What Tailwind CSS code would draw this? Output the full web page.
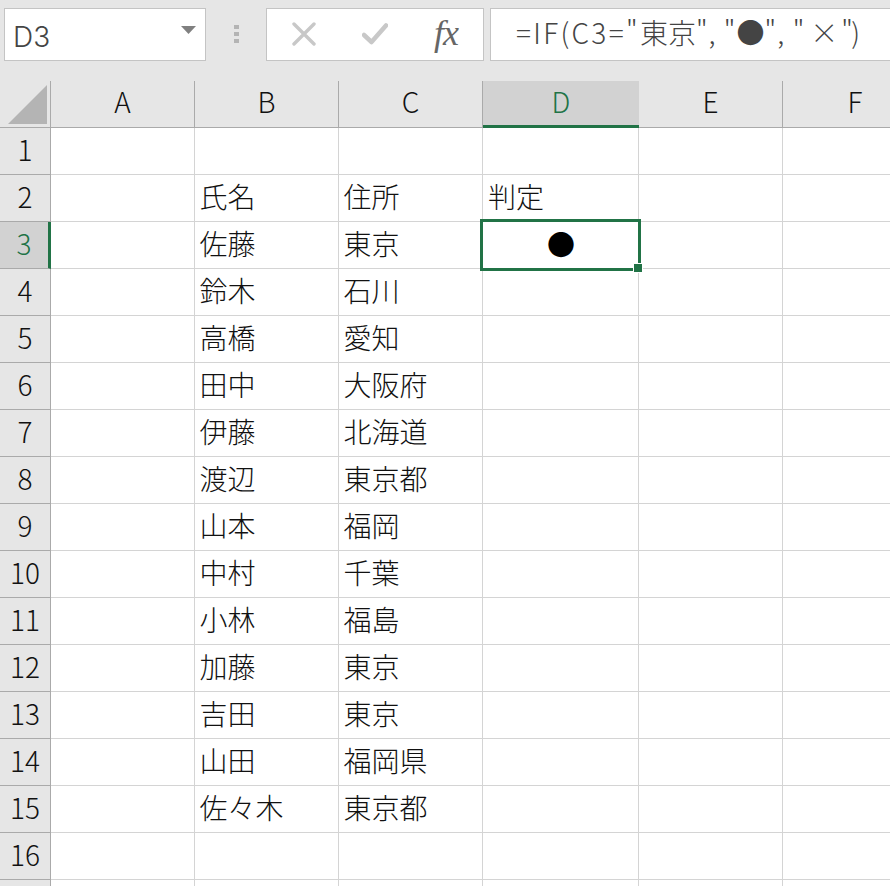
<!doctype html>
<html lang="ja"><head><meta charset="utf-8"><script src="https://cdn.jsdelivr.net/npm/@tailwindcss/browser@4"></script></head>
<body class="w-[890px] h-[886px] overflow-hidden bg-white text-[#111] font-light font-['Noto_Sans_CJK_JP','Noto_Sans_CJK_SC',sans-serif]">
<div class="h-[81px] bg-[#e6e6e6] flex pt-2 pl-1 items-start">
  <div class="w-[202px] h-[53px] bg-white border border-[#c4c4c4] flex items-center justify-between pl-[8px] pr-[8px]">
    <span class="text-[28px] leading-none text-[#444] font-['Inter',sans-serif] font-light mt-[4px]">D3</span>
    <svg class="w-[15px] h-[9px] mb-[8px] mr-[1px]" viewBox="0 0 15 9"><path d="M0 0H15L7.5 8Z" fill="#808080"/></svg>
  </div>
  <div class="w-[60px] h-[53px] flex flex-col items-center justify-center gap-[3px] pb-[2px] shrink-0">
    <i class="w-[5px] h-[4px] bg-[#b4b4b4]"></i><i class="w-[5px] h-[4px] bg-[#b4b4b4]"></i><i class="w-[5px] h-[4px] bg-[#b4b4b4]"></i>
  </div>
  <div class="w-[218px] h-[53px] bg-white border border-[#c4c4c4] flex items-center shrink-0 relative pb-[2px]">
    <svg class="ml-[25px] w-[24px] h-[24px]" viewBox="0 0 24 24"><path d="M2 2L22 22M22 2L2 22" stroke="#c8c8c8" stroke-width="3.4" stroke-linecap="round" fill="none"/></svg>
    <svg class="ml-[46px] w-[26px] h-[22px]" viewBox="0 0 26 22"><path d="M2 12L9.500 19L24 2.500" stroke="#c8c8c8" stroke-width="4.500" stroke-linejoin="round" stroke-linecap="round" fill="none"/></svg>
    <span class="ml-[46px] -mt-[2px] text-[36px] leading-none italic text-[#666] font-['Liberation_Serif',serif] font-normal tracking-[-1px]">fx</span>
  </div>
  <div class="ml-[6px] flex-1 h-[53px] bg-white border border-[#c4c4c4] border-r-0 flex items-center pl-[25px] pb-[6px] text-[28px] leading-none text-[#444] whitespace-pre"><span class="tracking-[2.3px]">=IF(C3="</span><span>東京</span><span class="tracking-[1px]">", "</span><span>●</span><span class="tracking-[1.2px]">", "</span><span class="tracking-[-1.6px]"> × ")</span></div>
</div>
<div class="relative grid grid-cols-[51px_144px_144px_144px_156px_144px_144px] grid-rows-[47px_repeat(17,47px)] text-[28px] leading-none">
  <div class="bg-[#e6e6e6] border-r border-b border-[#aaa] relative"><svg class="absolute left-[8px] top-[4px] w-[40px] h-[40px]" viewBox="0 0 40 40"><path d="M39 0V39H0Z" fill="#b4b4b4"/></svg></div>
  <div class="bg-[#e6e6e6] border-r border-b border-[#aaa] flex items-center justify-center pb-[7px]">A</div>
  <div class="bg-[#e6e6e6] border-r border-b border-[#aaa] flex items-center justify-center pb-[7px]">B</div>
  <div class="bg-[#e6e6e6] border-r border-b border-[#aaa] flex items-center justify-center pb-[7px]">C</div>
  <div class="bg-[#d2d2d2] border-b-[3px] border-[#217346] text-[#217346] flex items-center justify-center pb-[5px]">D</div>
  <div class="bg-[#e6e6e6] border-r border-b border-[#aaa] flex items-center justify-center pb-[7px]">E</div>
  <div class="bg-[#e6e6e6] border-b border-[#aaa] flex items-center justify-center pb-[7px]">F</div>
  <!-- rows -->
  <div class="bg-[#e6e6e6] border-r border-b border-[#aaa] flex items-center justify-center pb-[4px]">1</div><div class="border-r border-b border-[#d4d4d4]"></div><div class="border-r border-b border-[#d4d4d4]"></div><div class="border-r border-b border-[#d4d4d4]"></div><div class="border-r border-b border-[#d4d4d4]"></div><div class="border-r border-b border-[#d4d4d4]"></div><div class="border-b border-[#d4d4d4]"></div>
  <div class="bg-[#e6e6e6] border-r border-b border-[#aaa] flex items-center justify-center pb-[4px]">2</div><div class="border-r border-b border-[#d4d4d4]"></div><div class="border-r border-b border-[#d4d4d4] pl-[4.5px] pb-[4px] flex items-center">氏名</div><div class="border-r border-b border-[#d4d4d4] pl-[4.5px] pb-[4px] flex items-center">住所</div><div class="border-r border-b border-[#d4d4d4] pl-[5px] pb-[4px] flex items-center">判定</div><div class="border-r border-b border-[#d4d4d4]"></div><div class="border-b border-[#d4d4d4]"></div>
  <div class="bg-[#d2d2d2] border-r-[3px] border-r-[#217346] border-b border-b-[#aaa] text-[#217346] flex items-center justify-center pb-[4px]">3</div><div class="border-r border-b border-[#d4d4d4]"></div><div class="border-r border-b border-[#d4d4d4] pl-[4.5px] pb-[4px] flex items-center">佐藤</div><div class="border-r border-b border-[#d4d4d4] pl-[4.5px] pb-[4px] flex items-center">東京</div><div class="flex items-center justify-center text-black pb-[4px]">●</div><div class="border-r border-b border-[#d4d4d4]"></div><div class="border-b border-[#d4d4d4]"></div>
  <div class="bg-[#e6e6e6] border-r border-b border-[#aaa] flex items-center justify-center pb-[4px]">4</div><div class="border-r border-b border-[#d4d4d4]"></div><div class="border-r border-b border-[#d4d4d4] pl-[4.5px] pb-[4px] flex items-center">鈴木</div><div class="border-r border-b border-[#d4d4d4] pl-[4.5px] pb-[4px] flex items-center">石川</div><div class="border-r border-b border-[#d4d4d4]"></div><div class="border-r border-b border-[#d4d4d4]"></div><div class="border-b border-[#d4d4d4]"></div>
  <div class="bg-[#e6e6e6] border-r border-b border-[#aaa] flex items-center justify-center pb-[4px]">5</div><div class="border-r border-b border-[#d4d4d4]"></div><div class="border-r border-b border-[#d4d4d4] pl-[4.5px] pb-[4px] flex items-center">高橋</div><div class="border-r border-b border-[#d4d4d4] pl-[4.5px] pb-[4px] flex items-center">愛知</div><div class="border-r border-b border-[#d4d4d4]"></div><div class="border-r border-b border-[#d4d4d4]"></div><div class="border-b border-[#d4d4d4]"></div>
  <div class="bg-[#e6e6e6] border-r border-b border-[#aaa] flex items-center justify-center pb-[4px]">6</div><div class="border-r border-b border-[#d4d4d4]"></div><div class="border-r border-b border-[#d4d4d4] pl-[4.5px] pb-[4px] flex items-center">田中</div><div class="border-r border-b border-[#d4d4d4] pl-[4.5px] pb-[4px] flex items-center">大阪府</div><div class="border-r border-b border-[#d4d4d4]"></div><div class="border-r border-b border-[#d4d4d4]"></div><div class="border-b border-[#d4d4d4]"></div>
  <div class="bg-[#e6e6e6] border-r border-b border-[#aaa] flex items-center justify-center pb-[4px]">7</div><div class="border-r border-b border-[#d4d4d4]"></div><div class="border-r border-b border-[#d4d4d4] pl-[4.5px] pb-[4px] flex items-center">伊藤</div><div class="border-r border-b border-[#d4d4d4] pl-[4.5px] pb-[4px] flex items-center">北海道</div><div class="border-r border-b border-[#d4d4d4]"></div><div class="border-r border-b border-[#d4d4d4]"></div><div class="border-b border-[#d4d4d4]"></div>
  <div class="bg-[#e6e6e6] border-r border-b border-[#aaa] flex items-center justify-center pb-[4px]">8</div><div class="border-r border-b border-[#d4d4d4]"></div><div class="border-r border-b border-[#d4d4d4] pl-[4.5px] pb-[4px] flex items-center">渡辺</div><div class="border-r border-b border-[#d4d4d4] pl-[4.5px] pb-[4px] flex items-center">東京都</div><div class="border-r border-b border-[#d4d4d4]"></div><div class="border-r border-b border-[#d4d4d4]"></div><div class="border-b border-[#d4d4d4]"></div>
  <div class="bg-[#e6e6e6] border-r border-b border-[#aaa] flex items-center justify-center pb-[4px]">9</div><div class="border-r border-b border-[#d4d4d4]"></div><div class="border-r border-b border-[#d4d4d4] pl-[4.5px] pb-[4px] flex items-center">山本</div><div class="border-r border-b border-[#d4d4d4] pl-[4.5px] pb-[4px] flex items-center">福岡</div><div class="border-r border-b border-[#d4d4d4]"></div><div class="border-r border-b border-[#d4d4d4]"></div><div class="border-b border-[#d4d4d4]"></div>
  <div class="bg-[#e6e6e6] border-r border-b border-[#aaa] flex items-center justify-center pb-[4px]">10</div><div class="border-r border-b border-[#d4d4d4]"></div><div class="border-r border-b border-[#d4d4d4] pl-[4.5px] pb-[4px] flex items-center">中村</div><div class="border-r border-b border-[#d4d4d4] pl-[4.5px] pb-[4px] flex items-center">千葉</div><div class="border-r border-b border-[#d4d4d4]"></div><div class="border-r border-b border-[#d4d4d4]"></div><div class="border-b border-[#d4d4d4]"></div>
  <div class="bg-[#e6e6e6] border-r border-b border-[#aaa] flex items-center justify-center pb-[4px]">11</div><div class="border-r border-b border-[#d4d4d4]"></div><div class="border-r border-b border-[#d4d4d4] pl-[4.5px] pb-[4px] flex items-center">小林</div><div class="border-r border-b border-[#d4d4d4] pl-[4.5px] pb-[4px] flex items-center">福島</div><div class="border-r border-b border-[#d4d4d4]"></div><div class="border-r border-b border-[#d4d4d4]"></div><div class="border-b border-[#d4d4d4]"></div>
  <div class="bg-[#e6e6e6] border-r border-b border-[#aaa] flex items-center justify-center pb-[4px]">12</div><div class="border-r border-b border-[#d4d4d4]"></div><div class="border-r border-b border-[#d4d4d4] pl-[4.5px] pb-[4px] flex items-center">加藤</div><div class="border-r border-b border-[#d4d4d4] pl-[4.5px] pb-[4px] flex items-center">東京</div><div class="border-r border-b border-[#d4d4d4]"></div><div class="border-r border-b border-[#d4d4d4]"></div><div class="border-b border-[#d4d4d4]"></div>
  <div class="bg-[#e6e6e6] border-r border-b border-[#aaa] flex items-center justify-center pb-[4px]">13</div><div class="border-r border-b border-[#d4d4d4]"></div><div class="border-r border-b border-[#d4d4d4] pl-[4.5px] pb-[4px] flex items-center">吉田</div><div class="border-r border-b border-[#d4d4d4] pl-[4.5px] pb-[4px] flex items-center">東京</div><div class="border-r border-b border-[#d4d4d4]"></div><div class="border-r border-b border-[#d4d4d4]"></div><div class="border-b border-[#d4d4d4]"></div>
  <div class="bg-[#e6e6e6] border-r border-b border-[#aaa] flex items-center justify-center pb-[4px]">14</div><div class="border-r border-b border-[#d4d4d4]"></div><div class="border-r border-b border-[#d4d4d4] pl-[4.5px] pb-[4px] flex items-center">山田</div><div class="border-r border-b border-[#d4d4d4] pl-[4.5px] pb-[4px] flex items-center">福岡県</div><div class="border-r border-b border-[#d4d4d4]"></div><div class="border-r border-b border-[#d4d4d4]"></div><div class="border-b border-[#d4d4d4]"></div>
  <div class="bg-[#e6e6e6] border-r border-b border-[#aaa] flex items-center justify-center pb-[4px]">15</div><div class="border-r border-b border-[#d4d4d4]"></div><div class="border-r border-b border-[#d4d4d4] pl-[4.5px] pb-[4px] flex items-center">佐々木</div><div class="border-r border-b border-[#d4d4d4] pl-[4.5px] pb-[4px] flex items-center">東京都</div><div class="border-r border-b border-[#d4d4d4]"></div><div class="border-r border-b border-[#d4d4d4]"></div><div class="border-b border-[#d4d4d4]"></div>
  <div class="bg-[#e6e6e6] border-r border-b border-[#aaa] flex items-center justify-center pb-[4px]">16</div><div class="border-r border-b border-[#d4d4d4]"></div><div class="border-r border-b border-[#d4d4d4]"></div><div class="border-r border-b border-[#d4d4d4]"></div><div class="border-r border-b border-[#d4d4d4]"></div><div class="border-r border-b border-[#d4d4d4]"></div><div class="border-b border-[#d4d4d4]"></div>
  <div class="bg-[#e6e6e6] border-r border-[#aaa]"></div><div class="border-r border-[#d4d4d4]"></div><div class="border-r border-[#d4d4d4]"></div><div class="border-r border-[#d4d4d4]"></div><div class="border-r border-[#d4d4d4]"></div><div class="border-r border-[#d4d4d4]"></div><div></div>
  <div class="absolute left-[480px] top-[138px] w-[161px] h-[52px] border-[3px] border-[#217346] pointer-events-none"><i class="absolute -right-[4px] -bottom-[4px] w-[8px] h-[8px] bg-[#217346] outline outline-white"></i></div>
</div>
</body></html>
